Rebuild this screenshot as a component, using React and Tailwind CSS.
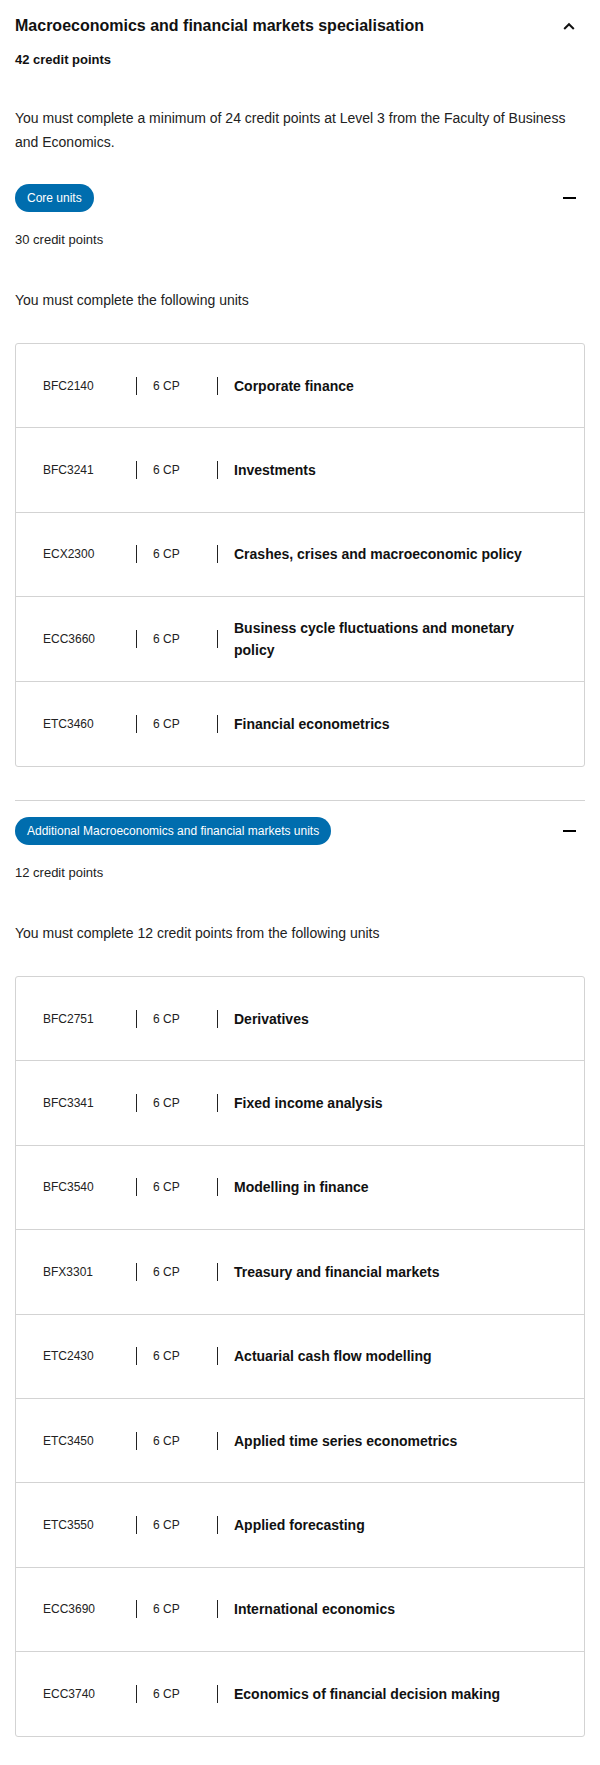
import React from "react";

const coreUnits = [
  ["BFC2140", "Corporate finance"],
  ["BFC3241", "Investments"],
  ["ECX2300", "Crashes, crises and macroeconomic policy"],
  ["ECC3660", "Business cycle fluctuations and monetary policy"],
  ["ETC3460", "Financial econometrics"],
];

const additionalUnits = [
  ["BFC2751", "Derivatives"],
  ["BFC3341", "Fixed income analysis"],
  ["BFC3540", "Modelling in finance"],
  ["BFX3301", "Treasury and financial markets"],
  ["ETC2430", "Actuarial cash flow modelling"],
  ["ETC3450", "Applied time series econometrics"],
  ["ETC3550", "Applied forecasting"],
  ["ECC3690", "International economics"],
  ["ECC3740", "Economics of financial decision making"],
];

function UnitRow({ code, title }) {
  return (
    <div className="h-[84.4px] flex items-center pl-[27px] pr-[27px]">
      <div className="w-[93px] shrink-0 text-[12px] leading-[16px] text-[#222]">{code}</div>
      <span className="w-px h-[18px] bg-[#222] shrink-0" />
      <div className="w-[80px] shrink-0 pl-4 text-[12px] leading-[16px] text-[#222]">6 CP</div>
      <span className="w-px h-[18px] bg-[#222] shrink-0" />
      <div className="flex-1 pl-4 text-[14px] leading-[22px] font-bold text-[#111]">{title}</div>
    </div>
  );
}

function Section({ label, credits, text, units }) {
  return (
    <div>
      <div className="flex items-center justify-between">
        <span className="inline-flex items-center h-[28px] px-3 rounded-full bg-[#006dae] text-white text-[12px] leading-[16px]">
          {label}
        </span>
        <span className="mr-[9px] w-[13px] h-[2px] bg-black" />
      </div>
      <p className="mt-[18px] text-[13px] leading-[20px] text-[#222]">{credits}</p>
      <p className="mt-[38px] text-[14px] leading-[24px] text-[#222]">{text}</p>
      <div className="mt-[31px] border border-[#d3d3d3] rounded-[3px] divide-y divide-[#d3d3d3]">
        {units.map(([c, t]) => (
          <UnitRow key={c} code={c} title={t} />
        ))}
      </div>
    </div>
  );
}

export default function App() {
  return (
    <div className="w-[600px] bg-white px-[15px] pt-[14px] pb-[28px] font-['Liberation_Sans',Arial,sans-serif] text-[#222]">
      <div className="flex items-center justify-between h-[24px]">
        <h2 className="text-[16px] leading-[24px] font-bold text-[#111]">
          Macroeconomics and financial markets specialisation
        </h2>
        <svg className="mr-[10px]" width="12" height="8" viewBox="0 0 12 8" fill="none">
          <path d="M1.2 7 L6 2.2 L10.8 7" stroke="#111" strokeWidth="2" />
        </svg>
      </div>
      <p className="mt-[12px] text-[13px] leading-[20px] font-bold text-[#111]">42 credit points</p>
      <p className="mt-[36px] text-[14px] leading-[24px] text-[#222]">
        You must complete a minimum of 24 credit points at Level 3 from the Faculty of Business and Economics.
      </p>
      <div className="mt-[30px]">
        <Section
          label="Core units"
          credits="30 credit points"
          text="You must complete the following units"
          units={coreUnits}
        />
      </div>
      <hr className="mt-[33px] border-0 border-t border-[#d3d3d3]" />
      <div className="mt-[16px]">
        <Section
          label="Additional Macroeconomics and financial markets units"
          credits="12 credit points"
          text="You must complete 12 credit points from the following units"
          units={additionalUnits}
        />
      </div>
    </div>
  );
}
